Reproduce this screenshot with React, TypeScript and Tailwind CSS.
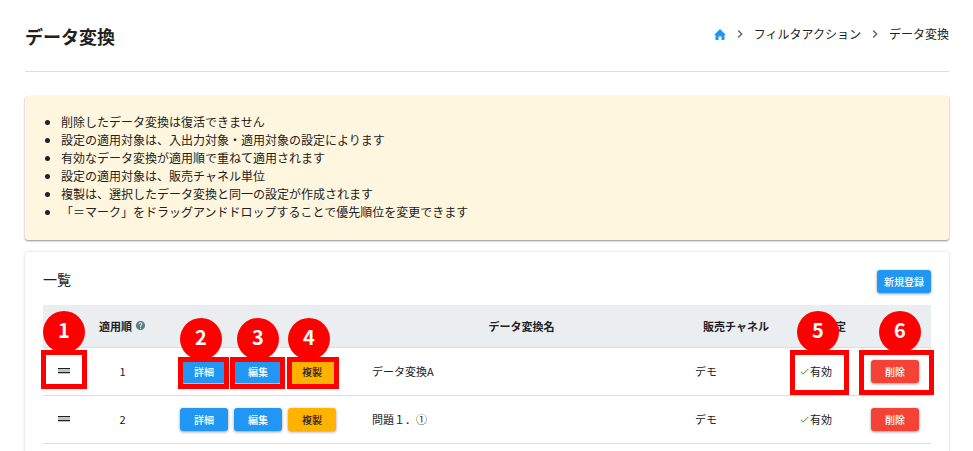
import type { ReactNode } from "react";
import { MdChevronRight, MdHelp, MdCheck } from "react-icons/md";

const notes = [
  "削除したデータ変換は復活できません",
  "設定の適用対象は、入出力対象・適用対象の設定によります",
  "有効なデータ変換が適用順で重ねて適用されます",
  "設定の適用対象は、販売チャネル単位",
  "複製は、選択したデータ変換と同一の設定が作成されます",
  "「＝マーク」をドラッグアンドドロップすることで優先順位を変更できます",
];

const rows = [
  { order: 1, name: "データ変換A", channel: "デモ", marked: true },
  { order: 2, name: "問題１．①", channel: "デモ", marked: false },
];

const tones = {
  blue: "bg-[#2196f3] text-white",
  amber: "bg-[#ffb300] text-[#212121]",
  red: "bg-[#f44336] text-white",
};

function Button({ tone, children, wide = false }: { tone: keyof typeof tones; children: ReactNode; wide?: boolean }) {
  return (
    <button
      type="button"
      className={`block h-[23px] rounded-[3px] text-[10px] leading-[23px] font-medium shadow-[0_1px_3px_rgba(0,0,0,0.4)] ${wide ? "w-[54px]" : "w-12"} ${tones[tone]}`}
    >
      {children}
    </button>
  );
}

type CalloutProps = { n: number; frame: string; badge: string; children: ReactNode };

// Numbered red frame laid over the control that it wraps.
function Callout({ n, frame, badge, children }: CalloutProps) {
  return (
    <div className="relative">
      {children}
      <span className={`pointer-events-none absolute border-[5px] border-[#ff0000] ${frame}`} />
      <span
        className={`pointer-events-none absolute flex size-[42px] items-center justify-center rounded-full bg-[#ff0000] pb-1 text-xl leading-5 font-bold text-white ${badge}`}
      >
        {n}
      </span>
    </div>
  );
}

function Marked({ on, ...rest }: CalloutProps & { on: boolean }) {
  return on ? <Callout {...rest} /> : <div>{rest.children}</div>;
}

function Handle() {
  return (
    <button type="button" aria-label="並べ替え" className="flex h-6 w-full items-center justify-center">
      <svg viewBox="0 0 12 6" className="h-[6px] w-3" shapeRendering="crispEdges">
        <path fill="#c4c4c4" d="M0 0h12v6H0z" />
        <path fill="#212121" d="M0 0h12v1H0zM0 4h12v1H0z" />
      </svg>
    </button>
  );
}

export default function App() {
  return (
    <div className="min-h-screen bg-white px-6 pl-[25px] text-xs text-[#212121] [font-family:'Noto_Sans_CJK_JP',sans-serif]">
      <header className="flex h-[72px] items-center justify-between border-b border-[#dedede]">
        <h1 className="text-lg leading-6 font-bold">データ変換</h1>
        <nav aria-label="breadcrumb" className="flex items-center pb-[3px]">
          <a href="#" aria-label="ホーム">
            <svg viewBox="0 0 12 11" className="h-[11px] w-3 text-[#2196f3]" fill="currentColor">
              <path d="M6 0 12 6H10.500V10.400Q10.500 11 9.900 11H7.500V7.500H4.500V11H2.100Q1.500 11 1.500 10.400V6H0Z" />
            </svg>
          </a>
          <MdChevronRight className="mx-1.5 size-4 text-[#616161]" />
          <a href="#">フィルタアクション</a>
          <MdChevronRight className="mx-1.5 size-4 text-[#616161]" />
          <span>データ変換</span>
        </nav>
      </header>

      <section className="mt-6 rounded-[3px] bg-[#fff6df] pt-[17px] pr-4 pb-[19px] pl-9 shadow-[0_1px_2px_rgba(0,0,0,0.45)]">
        <ul className="list-disc leading-[18px]">
          {notes.map((note) => (
            <li key={note}>{note}</li>
          ))}
        </ul>
      </section>

      <section className="mt-3 rounded-[3px] px-[18px] pt-[18px] pb-6 shadow-[0_0_3px_rgba(0,0,0,0.2)]">
        <div className="flex items-start justify-between">
          <h2 className="text-sm leading-[18px]">一覧</h2>
          <Button tone="blue" wide>新規登録</Button>
        </div>
        <table className="mt-3 w-full table-fixed border-collapse text-[11px] leading-4">
          <colgroup>
            <col className="w-[42px]" />
            <col className="w-[75px]" />
            <col className="w-[200px]" />
            <col />
            <col className="w-[106px]" />
            <col className="w-[70px]" />
            <col className="w-[72px]" />
          </colgroup>
          <thead>
            <tr className="h-[42px] border-b border-[#dedede] bg-[#ebeef1] font-bold">
              <th aria-label="並べ替え" />
              <th>
                <span className="flex items-center justify-center gap-[3px]">
                  適用順
                  <MdHelp className="size-[11px] text-[#607d8b]" />
                </span>
              </th>
              <th aria-label="操作" />
              <th>データ変換名</th>
              <th>販売チャネル</th>
              <th>有効設定</th>
              <th aria-label="削除" />
            </tr>
          </thead>
          <tbody>
            {rows.map(({ order, name, channel, marked }) => (
              <tr key={order} className="h-12 border-b border-[#dedede]">
                <td>
                  <Marked on={marked} n={1} frame="-inset-x-[2px] -top-[9px] h-[39px]" badge="left-0 -top-12">
                    <Handle />
                  </Marked>
                </td>
                <td className="text-center">{order}</td>
                <td className="pt-px pl-5">
                  <div className="flex gap-[6px]">
                    <Marked on={marked} n={2} frame="-left-[2px] -top-[3px] h-8 w-[51px]" badge="left-0 -top-[42px]">
                      <Button tone="blue">詳細</Button>
                    </Marked>
                    <Marked on={marked} n={3} frame="-left-1 -top-[3px] h-8 w-[55px]" badge="left-[3px] -top-[42px]">
                      <Button tone="blue">編集</Button>
                    </Marked>
                    <Marked on={marked} n={4} frame="-left-[1px] -top-[3px] h-8 w-[52px]" badge="left-0 -top-[42px]">
                      <Button tone="amber">複製</Button>
                    </Marked>
                  </div>
                </td>
                <td className="px-3">{name}</td>
                <td className="px-3">{channel}</td>
                <td>
                  <Marked on={marked} n={5} frame="left-[1px] -top-[9px] h-[45px] w-[59px]" badge="left-2 -top-12">
                    <div className="flex h-6 items-center pl-[10px]">
                      <MdCheck className="size-[11px] text-[#4caf50]" />
                      有効
                    </div>
                  </Marked>
                </td>
                <td className="pt-px pl-3">
                  <Marked on={marked} n={6} frame="-left-3 -top-[10px] h-[45px] w-[75px]" badge="left-2 -top-[49px]">
                    <Button tone="red">削除</Button>
                  </Marked>
                </td>
              </tr>
            ))}
          </tbody>
        </table>
      </section>
    </div>
  );
}
